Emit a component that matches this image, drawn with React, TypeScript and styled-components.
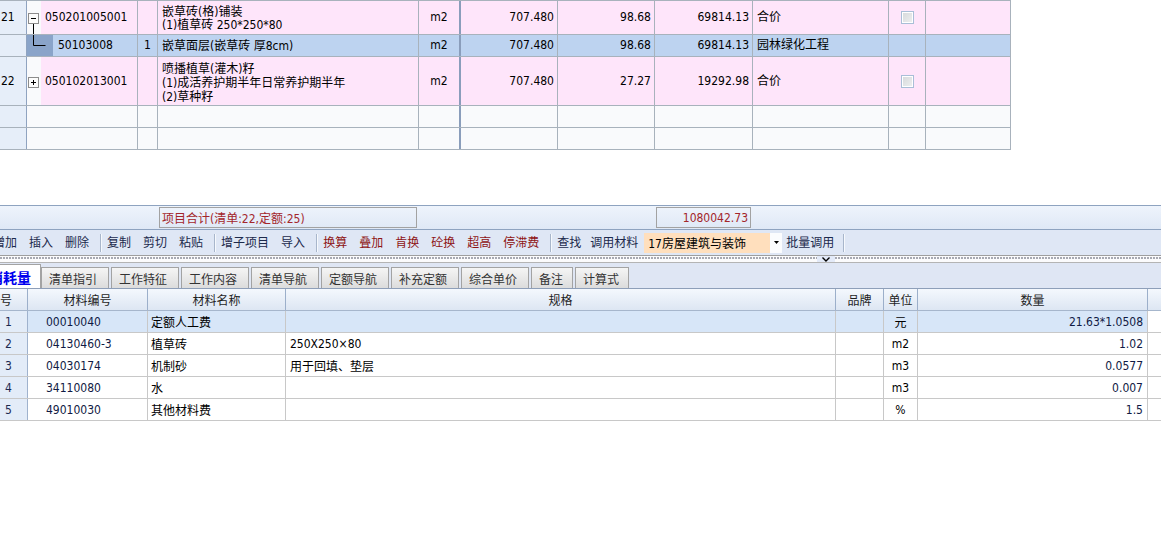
import styled, { createGlobalStyle } from "styled-components";

const FONT = `"DejaVu Sans Condensed", "Liberation Sans", "Noto Sans CJK SC", sans-serif`;

const GlobalStyle = createGlobalStyle`
  * { box-sizing: border-box; }
  html, body { margin: 0; padding: 0; background: #ffffff; }
  body {
    font-family: ${FONT};
    font-size: 12px;
    color: #000;
  }
`;

type Tone = "bill" | "quota" | "blank";
type Align = "left" | "center" | "right";

const toneBg: Record<Tone, string> = {
  bill: "#fee5fa",
  quota: "#bdd3f0",
  blank: "#f9fafc",
};
const justify: Record<Align, string> = {
  left: "flex-start",
  center: "center",
  right: "flex-end",
};

const BILL_COLS = "27px 111px 20px 261px 42px 97px 97px 98px 136px 37px 85px";
const MAT_COLS = "28px 120px 138px 550px 48px 34px 230px 1fr";

const Page = styled.div`
  width: 1161px;
  height: 555px;
  overflow: hidden;
  display: flex;
  flex-direction: column;
  background: #fff;
`;

/* ---------- top bill grid ---------- */

const TopPane = styled.div`
  height: 205px;
  flex: none;
`;

const BillGrid = styled.div`
  width: 1011px;
  border-top: 1px solid #a8b2bc;
`;

const BillRowBox = styled.div<{ $h: number; $tone: Tone }>`
  display: grid;
  grid-template-columns: ${BILL_COLS};
  height: ${(p) => p.$h}px;
  border-bottom: 1px solid #a8b2bc;
  background: ${(p) => toneBg[p.$tone]};
`;

const BillCell = styled.div<{ $align?: Align; $thick?: boolean }>`
  display: flex;
  align-items: center;
  justify-content: ${(p) => justify[p.$align ?? "left"]};
  padding: ${(p) => (p.$align === "right" ? "0 3px 0 0" : p.$align === "center" ? "0" : "0 0 0 4px")};
  border-right: ${(p) => (p.$thick ? "2px solid #8a9dbb" : "1px solid #a8b2bc")};
  white-space: nowrap;
  overflow: hidden;
  line-height: 13px;
`;

const NoCell = styled(BillCell)`
  background: #e6eef9;
  border-right-color: #8fa3c0;
  padding-left: 1px;
`;

const TreeCell = styled(BillCell)`
  padding: 0;
  align-items: stretch;
`;

const Gutter = styled.div<{ $w: number; $dark?: boolean }>`
  flex: none;
  width: ${(p) => p.$w}px;
  background: ${(p) => (p.$dark ? "#8aa4c9" : "#f9fafc")};
  svg { display: block; }
`;

const CodeText = styled.span<{ $pad: number }>`
  align-self: center;
  padding-left: ${(p) => p.$pad}px;
`;

const NameCell = styled(BillCell)<{ $lh: number; $top: number }>`
  flex-direction: column;
  align-items: flex-start;
  justify-content: center;
  line-height: ${(p) => p.$lh}px;
  padding-top: ${(p) => p.$top}px;
`;

const CheckBox = styled.span`
  width: 13px;
  height: 13px;
  border: 1px solid #a9bed7;
  box-shadow: inset 0 0 0 1px #ffffff;
  background: linear-gradient(135deg, #d6d8da, #eef0f1);
`;

type TreeMode = "open" | "closed" | "leaf";

function TreeGlyph({ w, h, mode }: { w: number; h: number; mode: TreeMode }) {
  const mid = Math.floor(h / 2);
  if (mode === "leaf") {
    return (
      <svg width={w} height={h}>
        <path d={`M6.5 0V${mid + 0.5}H18.5`} stroke="#000" fill="none" />
      </svg>
    );
  }
  const top = mid - 4;
  return (
    <svg width={w} height={h}>
      <rect x={1.5} y={top + 0.5} width={10} height={10} fill="#fcfcfc" stroke="#8c8c8c" />
      <path d={`M4 ${top + 5.5}H9`} stroke="#000" />
      {mode === "closed" && <path d={`M6.5 ${top + 3}V${top + 8}`} stroke="#000" />}
      {mode === "open" && <path d={`M6.5 ${top + 11}V${h}`} stroke="#000" />}
    </svg>
  );
}

interface IBillRow {
  tone: Tone;
  h: number;
  no?: string;
  code?: string;
  count?: string;
  name?: string[];
  lh?: number;
  top?: number;
  unit?: string;
  qty?: string;
  price?: string;
  total?: string;
  remark?: string;
  check?: boolean;
  mode?: TreeMode;
}

const billRows: IBillRow[] = [
  {
    tone: "bill",
    h: 34,
    no: "21",
    code: "050201005001",
    name: ["嵌草砖(格)铺装", "(1)植草砖 250*250*80"],
    lh: 13,
    top: 3,
    unit: "m2",
    qty: "707.480",
    price: "98.68",
    total: "69814.13",
    remark: "合价",
    check: true,
    mode: "open",
  },
  {
    tone: "quota",
    h: 22,
    code: "50103008",
    count: "1",
    name: ["嵌草面层(嵌草砖 厚8cm)"],
    lh: 13,
    top: 1,
    unit: "m2",
    qty: "707.480",
    price: "98.68",
    total: "69814.13",
    remark: "园林绿化工程",
    mode: "leaf",
  },
  {
    tone: "bill",
    h: 49,
    no: "22",
    code: "050102013001",
    name: ["喷播植草(灌木)籽", "(1)成活养护期半年日常养护期半年", "(2)草种籽"],
    lh: 14,
    top: 3,
    unit: "m2",
    qty: "707.480",
    price: "27.27",
    total: "19292.98",
    remark: "合价",
    check: true,
    mode: "closed",
  },
  { tone: "blank", h: 22 },
  { tone: "blank", h: 22 },
];

function BillRow({ row }: { row: IBillRow }) {
  const inner = row.h - 1;
  return (
    <BillRowBox $h={row.h} $tone={row.tone}>
      <NoCell>{row.no}</NoCell>
      <TreeCell>
        {row.mode && row.mode !== "leaf" && (
          <Gutter $w={14}>
            <TreeGlyph w={14} h={inner} mode={row.mode} />
          </Gutter>
        )}
        {row.mode === "leaf" && (
          <Gutter $w={26} $dark>
            <TreeGlyph w={26} h={inner} mode="leaf" />
          </Gutter>
        )}
        {row.code && <CodeText $pad={row.mode === "leaf" ? 5 : 4}>{row.code}</CodeText>}
      </TreeCell>
      <BillCell $align="center">{row.count}</BillCell>
      <NameCell $lh={row.lh ?? 13} $top={row.top ?? 0}>
        {row.name?.map((line) => (
          <span key={line}>{line}</span>
        ))}
      </NameCell>
      <BillCell $align="center" $thick>
        {row.unit}
      </BillCell>
      <BillCell $align="right">{row.qty}</BillCell>
      <BillCell $align="right">{row.price}</BillCell>
      <BillCell $align="right">{row.total}</BillCell>
      <BillCell>{row.remark}</BillCell>
      <BillCell $align="center">{row.check && <CheckBox />}</BillCell>
      <BillCell />
    </BillRowBox>
  );
}

/* ---------- bottom pane ---------- */

const BottomPane = styled.div`
  flex: 1;
  display: flex;
  flex-direction: column;
  border-top: 1px solid #8ea3c0;
`;

const StatusBar = styled.div`
  height: 24px;
  flex: none;
  display: flex;
  align-items: center;
  gap: 239px;
  padding-left: 159px;
  background: linear-gradient(#eef4fc, #dfe8f6);
  border-bottom: 1px solid #8ea3c0;
`;

const StatusBox = styled.div<{ $w: number; $align: Align }>`
  width: ${(p) => p.$w}px;
  height: 21px;
  display: flex;
  align-items: center;
  justify-content: ${(p) => justify[p.$align]};
  padding: 0 2px;
  border: 1px solid #a2a2a2;
  color: #a3262b;
  white-space: nowrap;
`;

const Toolbar = styled.div`
  height: 25px;
  flex: none;
  display: flex;
  align-items: center;
  overflow: hidden;
  background: #dfe7f5;
`;

const ToolRow = styled.div`
  display: flex;
  align-items: center;
  margin-left: -13px;
`;

const ToolButton = styled.span<{ $red?: boolean; $px?: number }>`
  padding: 0 ${(p) => p.$px ?? 6}px;
  line-height: 16px;
  white-space: nowrap;
  color: ${(p) => (p.$red ? "#8e1414" : "#1c2a4c")};
`;

const ToolSep = styled.span`
  width: 0;
  height: 18px;
  margin-left: 5px;
  border-left: 1px solid #a8b6cb;
  box-shadow: 1px 0 0 #f6f9fd;
`;

const Combo = styled.div`
  width: 138px;
  height: 20px;
  margin-left: 3px;
  display: flex;
  align-items: center;
  background: #ffdfbd;
`;

const ComboText = styled.span`
  flex: 1;
  padding-left: 4px;
  white-space: nowrap;
`;

const ComboArrow = styled.span`
  width: 12px;
  height: 100%;
  display: flex;
  align-items: center;
  justify-content: center;
  background: #fbfcfe;
`;

const Splitter = styled.div`
  height: 8px;
  flex: none;
  display: flex;
  border-top: 1px solid #9e9e9e;
  border-bottom: 1px solid #b4b4b4;
  background: #fbfbfc;
`;

const Grip = styled.div<{ $w?: number }>`
  ${(p) => (p.$w ? `width: ${p.$w}px; flex: none;` : "flex: 1;")}
  background: repeating-linear-gradient(90deg, #a7a9b2 0 2px, transparent 2px 3px) 0 1px / 100% 2px no-repeat;
`;

const GripButton = styled.div`
  width: 18px;
  flex: none;
  display: flex;
  align-items: center;
  justify-content: center;
  background: #e3eaf8;
  svg { display: block; }
`;

const TabStrip = styled.div`
  height: 26px;
  flex: none;
  display: flex;
  align-items: flex-end;
  overflow: hidden;
  background: #dfe6f4;
  border-bottom: 1px solid #8e9fb9;
`;

const ActiveTab = styled.div`
  height: 24px;
  margin-left: -20px;
  padding: 0 9px 0 8px;
  display: flex;
  align-items: center;
  background: #fff;
  border: 1px solid #a3a3a3;
  border-bottom: none;
  color: #0000ee;
  font-size: 14px;
  font-weight: bold;
  white-space: nowrap;
`;

const Tab = styled.div`
  min-width: 68px;
  height: 21px;
  margin-right: 2px;
  padding: 0 9px 0 7px;
  display: flex;
  align-items: center;
  background: linear-gradient(#f5f5f5, #dcdcdc);
  border: 1px solid #a3a3a3;
  border-bottom: none;
  color: #333;
  white-space: nowrap;
`;

const ShortTab = styled(Tab)`
  min-width: 0;
`;

const MatHeader = styled.div`
  display: grid;
  grid-template-columns: ${MAT_COLS};
  height: 22px;
  flex: none;
  background: linear-gradient(#f4f8fd, #dde6f3);
  border-bottom: 1px solid #a6b6cc;
`;

const HeadCell = styled.div<{ $indent?: number; $last?: boolean }>`
  display: flex;
  align-items: center;
  justify-content: ${(p) => (p.$indent ? "flex-start" : "center")};
  padding-left: ${(p) => p.$indent ?? 0}px;
  border-right: ${(p) => (p.$last ? "none" : "1px solid #9cafca")};
  color: #1e1e1e;
  white-space: nowrap;
  overflow: hidden;
`;

const MatRowBox = styled.div<{ $sel?: boolean }>`
  display: grid;
  grid-template-columns: ${MAT_COLS};
  height: 22px;
  flex: none;
  background: ${(p) => (p.$sel ? "#d7e6f8" : "#ffffff")};
  border-bottom: 1px solid #c8c8c8;
`;

const MatCell = styled.div<{ $align?: Align; $pad?: number; $ink?: string }>`
  display: flex;
  align-items: center;
  justify-content: ${(p) => justify[p.$align ?? "left"]};
  padding: ${(p) =>
    p.$align === "right" ? `0 ${p.$pad ?? 4}px 0 0` : `0 0 0 ${p.$pad ?? 0}px`};
  border-right: 1px solid #c8c8c8;
  color: ${(p) => p.$ink ?? "#000"};
  white-space: nowrap;
  overflow: hidden;
`;

const MatNoCell = styled(MatCell)`
  background: #e3ecf8;
  border-right-color: #9fb2cd;
  color: #1c2a50;
`;

const MatTail = styled.div`
  background: #fff;
`;

interface IMaterial {
  no: string;
  code: string;
  name: string;
  spec: string;
  brand: string;
  unit: string;
  qty: string;
}

const materials: IMaterial[] = [
  { no: "1", code: "00010040", name: "定额人工费", spec: "", brand: "", unit: "元", qty: "21.63*1.0508" },
  { no: "2", code: "04130460-3", name: "植草砖", spec: "250X250×80", brand: "", unit: "m2", qty: "1.02" },
  { no: "3", code: "04030174", name: "机制砂", spec: "用于回填、垫层", brand: "", unit: "m3", qty: "0.0577" },
  { no: "4", code: "34110080", name: "水", spec: "", brand: "", unit: "m3", qty: "0.007" },
  { no: "5", code: "49010030", name: "其他材料费", spec: "", brand: "", unit: "%", qty: "1.5" },
];

const tabs = ["清单指引", "工作特征", "工作内容", "清单导航", "定额导航", "补充定额", "综合单价"];

export default function App() {
  return (
    <>
      <GlobalStyle />
      <Page>
        <TopPane>
          <BillGrid>
            {billRows.map((row, i) => (
              <BillRow key={i} row={row} />
            ))}
          </BillGrid>
        </TopPane>
        <BottomPane>
          <StatusBar>
            <StatusBox $w={258} $align="left">
              项目合计(清单:22,定额:25)
            </StatusBox>
            <StatusBox $w={95} $align="right">
              1080042.73
            </StatusBox>
          </StatusBar>
          <Toolbar>
            <ToolRow>
              {["增加", "插入", "删除"].map((t) => (
                <ToolButton key={t}>{t}</ToolButton>
              ))}
              <ToolSep />
              {["复制", "剪切", "粘贴"].map((t) => (
                <ToolButton key={t}>{t}</ToolButton>
              ))}
              <ToolSep />
              {["增子项目", "导入"].map((t) => (
                <ToolButton key={t}>{t}</ToolButton>
              ))}
              <ToolSep />
              {["换算", "叠加", "肯换", "砼换", "超高", "停滞费"].map((t) => (
                <ToolButton key={t} $red>
                  {t}
                </ToolButton>
              ))}
              <ToolSep />
              <ToolButton>查找</ToolButton>
              <ToolButton $px={3}>调用材料</ToolButton>
              <Combo>
                <ComboText>17房屋建筑与装饰</ComboText>
                <ComboArrow>
                  <svg width="5" height="3">
                    <path d="M0 0H5L2.5 3Z" fill="#000" />
                  </svg>
                </ComboArrow>
              </Combo>
              <ToolButton $px={4}>批量调用</ToolButton>
              <ToolSep />
            </ToolRow>
          </Toolbar>
          <Splitter>
            <Grip $w={817} />
            <GripButton>
              <svg width="8" height="5">
                <path d="M0.5 0.5L4 4L7.5 0.5" stroke="#000" strokeWidth="1.4" fill="none" />
              </svg>
            </GripButton>
            <Grip />
          </Splitter>
          <TabStrip>
            <ActiveTab>消耗量</ActiveTab>
            {tabs.map((t) => (
              <Tab key={t}>{t}</Tab>
            ))}
            <ShortTab>备注</ShortTab>
            <ShortTab>计算式</ShortTab>
          </TabStrip>
          <MatHeader>
            <HeadCell $indent={1}>
              <span style={{ marginLeft: -13 }}>序号</span>
            </HeadCell>
            <HeadCell>材料编号</HeadCell>
            <HeadCell>材料名称</HeadCell>
            <HeadCell>规格</HeadCell>
            <HeadCell>品牌</HeadCell>
            <HeadCell>单位</HeadCell>
            <HeadCell>数量</HeadCell>
            <HeadCell $last />
          </MatHeader>
          {materials.map((m, i) => (
            <MatRowBox key={m.code} $sel={i === 0}>
              <MatNoCell $pad={5}>{m.no}</MatNoCell>
              <MatCell $pad={18} $ink="#101a44">
                {m.code}
              </MatCell>
              <MatCell $pad={3}>{m.name}</MatCell>
              <MatCell $pad={4}>{m.spec}</MatCell>
              <MatCell $align="center">{m.brand}</MatCell>
              <MatCell $align="center">{m.unit}</MatCell>
              <MatCell $align="right" $pad={4} $ink="#101a44">
                {m.qty}
              </MatCell>
              <MatTail />
            </MatRowBox>
          ))}
        </BottomPane>
      </Page>
    </>
  );
}
